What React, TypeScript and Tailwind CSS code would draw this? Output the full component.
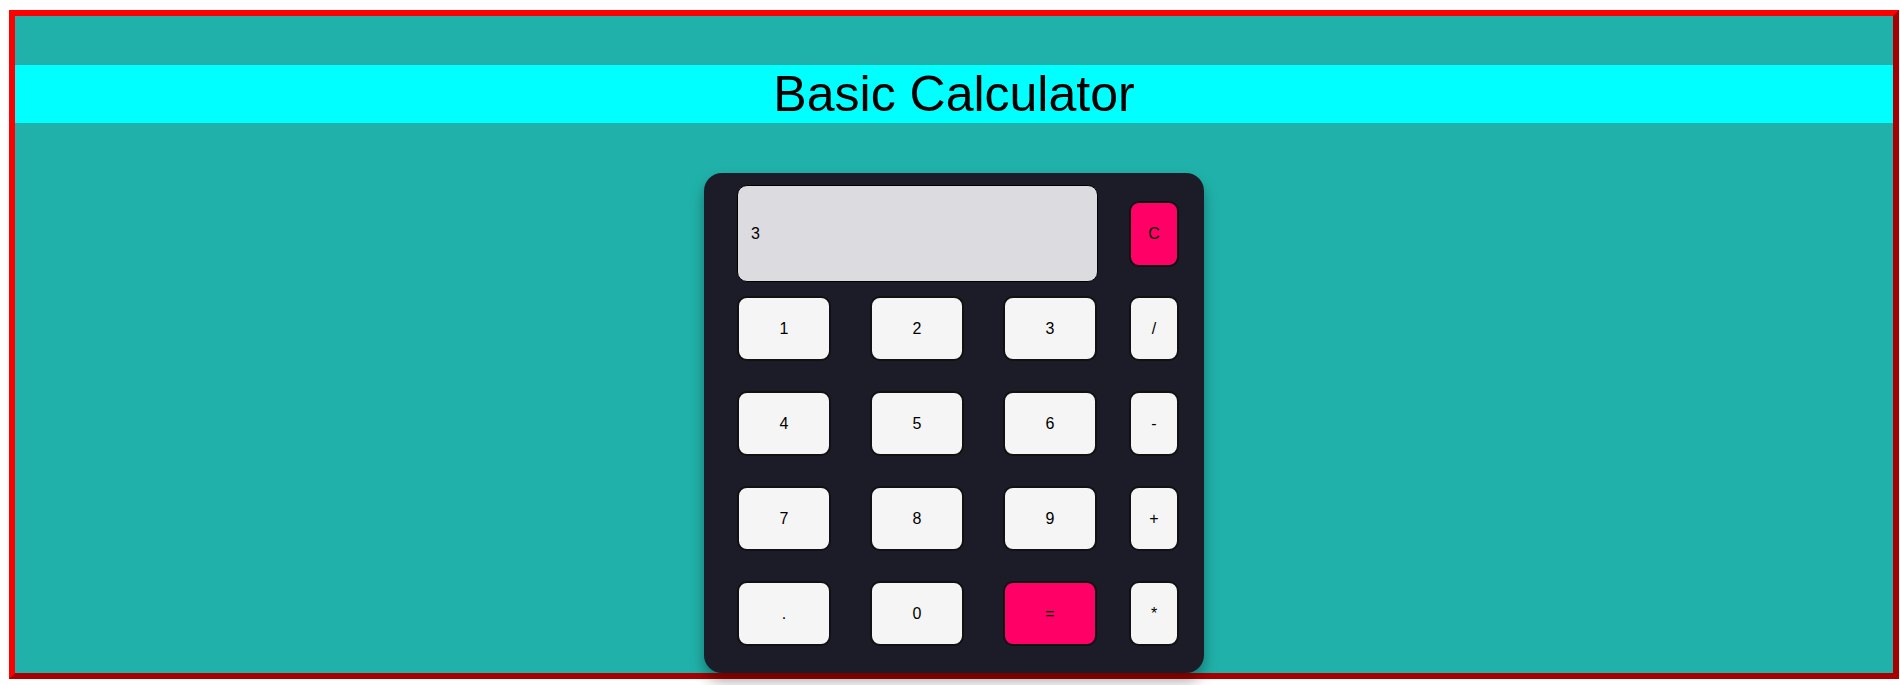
import React, { useState } from 'react';

const KEYS: string[][] = [
  ['1', '2', '3', '/'],
  ['4', '5', '6', '-'],
  ['7', '8', '9', '+'],
  ['.', '0', '=', '*'],
];

const Key: React.FC<{ label: string; wide: boolean; accent?: boolean; onPress: (k: string) => void }> = ({ label, wide, accent, onPress }) => (
  <button
    onClick={() => onPress(label)}
    className={`${wide ? 'w-[94px]' : 'w-[50px]'} h-[65px] rounded-[10px] border-2 border-[#111] text-[16px] text-black flex items-center justify-center ${accent ? 'bg-[#ff0066]' : 'bg-[#f5f5f5]'}`}
  >
    {label}
  </button>
);

const App: React.FC = () => {
  const [value, setValue] = useState('3');

  const press = (k: string) => {
    if (k === '=') {
      try {
        // eslint-disable-next-line no-new-func
        setValue(String(Function(`return (${value})`)()));
      } catch {
        setValue('Error');
      }
      return;
    }
    setValue(v => v + k);
  };

  return (
    <div className="min-h-screen bg-white font-['Liberation_Sans',Arial,sans-serif] overflow-hidden">
      <div className="ml-[9px] mt-[10px] w-[1890px] h-[669px] border-[6px] border-solid border-t-[#ff0000] border-l-[#ff0000] border-r-[#a80000] border-b-[#a80000] bg-[#20b2aa] flex flex-col items-center">
        <div className="h-[50px]" />
        <h1 className="w-full h-[58px] bg-[#00ffff] text-center text-[50px] leading-[58px] text-black">
          Basic Calculator
        </h1>

        <div className="mt-[50px] w-[500px] h-[500px] shrink-0 rounded-[18px] bg-[#1b1c28] pl-[33px] pt-[12px] shadow-[0_8px_14px_rgba(0,0,0,0.35)]">
          <div className="flex items-center">
            <div className="w-[361px] h-[97px] rounded-[10px] border border-black bg-[#dcdbe0] pl-[13px] flex items-center text-[16px] text-black">
              {value}
            </div>
            <button
              onClick={() => setValue('')}
              className="ml-[31px] w-[50px] h-[66px] rounded-[10px] border-2 border-[#111] bg-[#ff0066] text-[16px] text-black flex items-center justify-center"
            >
              C
            </button>
          </div>

          <div className="mt-[14px] grid grid-cols-[133px_133px_126px_50px] gap-y-[30px]">
            {KEYS.map(row =>
              row.map((k, i) => (
                <Key key={k} label={k} wide={i < 3} accent={k === '='} onPress={press} />
              ))
            )}
          </div>
        </div>
      </div>
    </div>
  );
};

export default App;
